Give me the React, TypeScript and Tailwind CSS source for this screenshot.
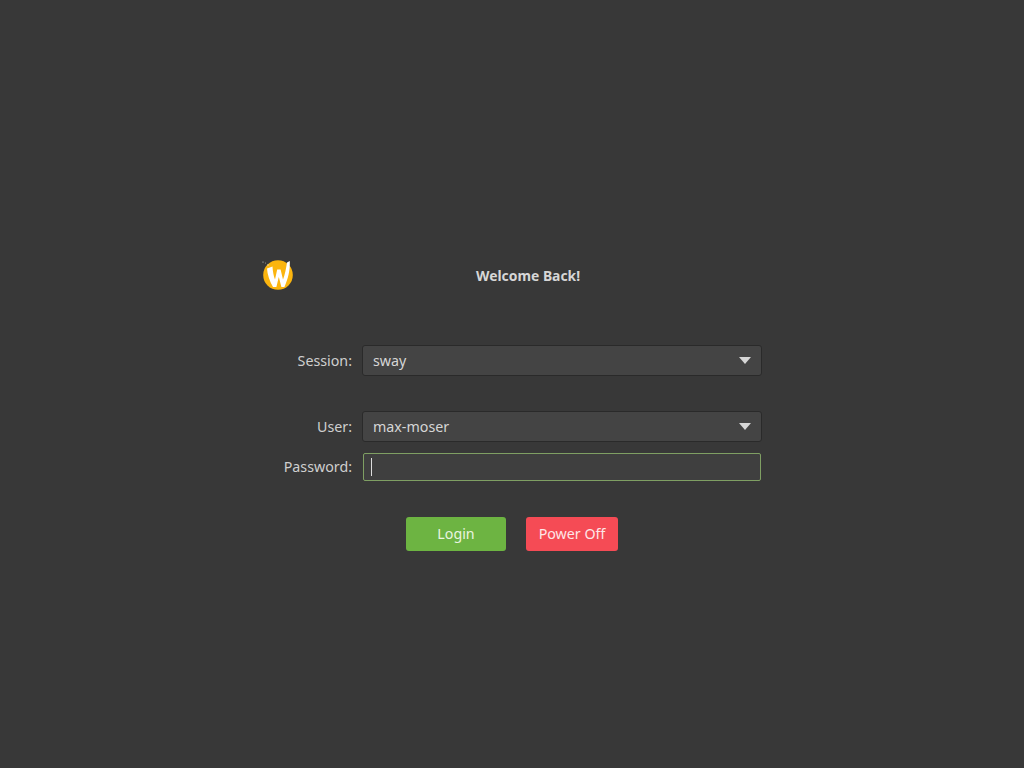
import React from 'react';

const WaylandLogo = () => (
    <svg width="32" height="34" viewBox="0 0 32 34" className="block">
        <circle cx="16" cy="17" r="14.8" fill="#fbb50f" />
        <path d="M5 10.5 L10.5 8.5 C10.8 13.5 11.6 18 13 21.5 L15.2 11.5 L18.6 11.5 L21 21.5 C22.8 17 24.2 10 25 4.5 L27.8 3 C28.2 12 26 21 22.4 29 L19.4 29 L16.8 19 L14.4 29 L11 29 C7.6 23 5.3 16.5 5 10.5 Z" fill="#ffffff" />
        <circle cx="1" cy="4" r="0.6" fill="#cfcfcf" />
        <circle cx="3.5" cy="5" r="0.5" fill="#a8a8a8" />
        <circle cx="6" cy="7" r="0.7" fill="#e0e0e0" />
    </svg>
);

const Caret = () => (
    <svg width="12" height="7" viewBox="0 0 12 7" className="block">
        <path d="M0 0 H12 L6 7 Z" fill="#d6d6d6" />
    </svg>
);

const Label = ({ children }: { children: React.ReactNode }) => (
    <div className="w-[90px] text-right text-[14.25px] text-[#cfcfcf]">{children}</div>
);

const Select = ({ value }: { value: string }) => (
    <div className="flex h-[31px] w-[400px] items-center justify-between rounded-[3px] border border-[#2a2a2a] bg-[#444444] px-[10px] text-[14.25px] text-[#d6d6d6]">
        <span>{value}</span>
        <Caret />
    </div>
);

export default function App() {
    return (
        <div className="flex h-[768px] w-[1024px] flex-col items-center bg-[#383838] pt-[258px] font-['Noto_Sans',sans-serif]">
            <div className="w-[500px]">
                {/* Header */}
                <div className="flex h-[34px] items-center">
                    <WaylandLogo />
                    <div className="ml-[182px] pt-[2px] text-[13.9px] font-bold leading-none text-[#d6d6d6]">Welcome Back!</div>
                </div>

                {/* Form */}
                <div className="mt-[53px] flex items-center gap-[10px]">
                    <Label>Session:</Label>
                    <Select value="sway" />
                </div>
                <div className="mt-[35px] flex items-center gap-[10px]">
                    <Label>User:</Label>
                    <Select value="max-moser" />
                </div>
                <div className="mt-[11px] flex items-center gap-[10px]">
                    <Label>Password:</Label>
                    <div className="ml-[1px] flex h-[28px] w-[398px] items-center rounded-[2px] border border-[#7f9f63] bg-[#3f3f3f] pl-[7px]">
                        <div className="h-[18px] w-px bg-[#dddddd]"></div>
                    </div>
                </div>

                {/* Buttons */}
                <div className="mt-[36px] flex justify-center gap-[20px]">
                    <button className="h-[34px] w-[100px] rounded-[3px] bg-[#6db442] pb-[1px] text-[14.25px] text-[#e9f5e0]">Login</button>
                    <button className="h-[34px] w-[92px] rounded-[3px] bg-[#f54b55] pb-[1px] text-[14.25px] text-[#fde6e7]">Power Off</button>
                </div>
            </div>
        </div>
    );
}
